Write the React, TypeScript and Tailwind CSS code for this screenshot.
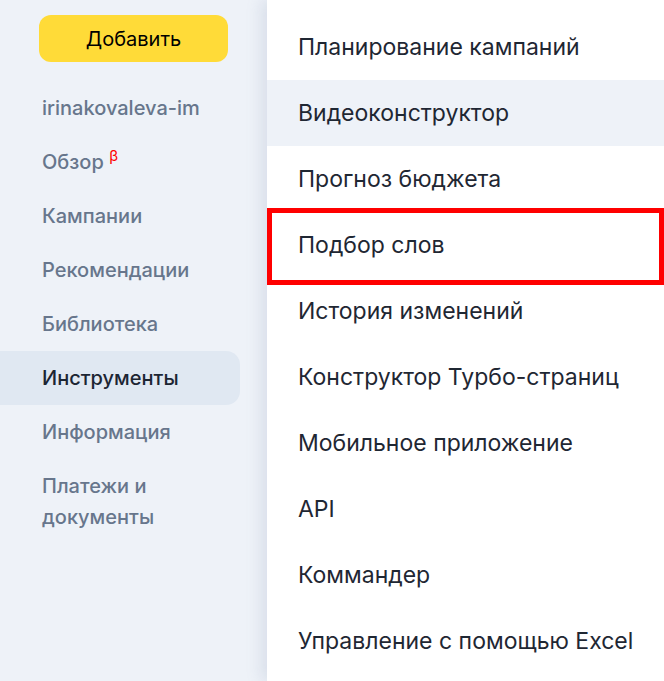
import { useState } from 'react';

const sideItems = ['irinakovaleva-im', 'Обзор', 'Кампании', 'Рекомендации', 'Библиотека', 'Инструменты', 'Информация', 'Платежи и документы'];

const tools = [
  'Планирование кампаний',
  'Видеоконструктор',
  'Прогноз бюджета',
  'Подбор слов',
  'История изменений',
  'Конструктор Турбо-страниц',
  'Мобильное приложение',
  'API',
  'Коммандер',
  'Управление с помощью Excel',
];

export default function App() {
  const [active] = useState('Инструменты');

  return (
    <div className="flex h-[681px] w-[664px] overflow-hidden bg-[#eef2f8] font-['Inter','Noto_Sans',sans-serif]">
      <aside className="w-[267px] shrink-0 pt-[15px]">
        <button className="ml-[39px] h-[47px] w-[189px] rounded-[12px] bg-[#ffdb38] text-[20px] text-black">
          Добавить
        </button>
        <nav className="mt-[19px] flex flex-col">
          {sideItems.map((item) => (
            <div
              key={item}
              className={`w-[240px] rounded-r-[14px] py-[11.5px] pl-[42px] pr-4 text-[20px] font-medium leading-[31px] ${
                item === active ? 'bg-[#e0e8f2] text-[#1c2533]' : 'text-[#67768c]'
              }`}
            >
              {item === 'Обзор' ? (
                <span>
                  Обзор <sup className="text-[15px] font-normal text-[#ff0000]">β</sup>
                </span>
              ) : item === 'Платежи и документы' ? (
                <span>
                  Платежи и
                  <br />
                  документы
                </span>
              ) : (
                item
              )}
            </div>
          ))}
        </nav>
      </aside>

      <main className="flex-1 bg-white pt-[14px] shadow-[-6px_0_14px_rgba(120,140,170,0.18)]">
        {tools.map((tool, i) => (
          <div
            key={tool}
            className={`relative flex h-[66px] items-center pl-[31px] text-[23px] text-[#1f2733] ${
              i === 1 ? 'bg-[#eef2f8]' : ''
            }`}
          >
            {tool}
            {tool === 'Подбор слов' && (
              <div className="absolute top-[-4px] bottom-[-7px] left-0 right-0 border-[5px] border-[#ff0000]" />
            )}
          </div>
        ))}
      </main>
    </div>
  );
}
